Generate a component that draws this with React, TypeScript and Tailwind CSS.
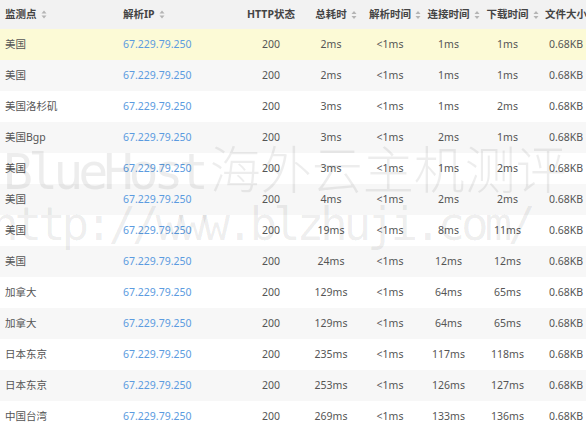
import React from 'react'

interface Row {
  node: string
  total: string
  dns: string
  connect: string
  download: string
}

const ROWS: Row[] = [
  { node: '美国', total: '2ms', dns: '<1ms', connect: '1ms', download: '1ms' },
  { node: '美国', total: '2ms', dns: '<1ms', connect: '1ms', download: '1ms' },
  { node: '美国洛杉矶', total: '3ms', dns: '<1ms', connect: '1ms', download: '2ms' },
  { node: '美国Bgp', total: '3ms', dns: '<1ms', connect: '2ms', download: '1ms' },
  { node: '美国', total: '3ms', dns: '<1ms', connect: '1ms', download: '2ms' },
  { node: '美国', total: '4ms', dns: '<1ms', connect: '2ms', download: '2ms' },
  { node: '美国', total: '19ms', dns: '<1ms', connect: '8ms', download: '11ms' },
  { node: '美国', total: '24ms', dns: '<1ms', connect: '12ms', download: '12ms' },
  { node: '加拿大', total: '129ms', dns: '<1ms', connect: '64ms', download: '65ms' },
  { node: '加拿大', total: '129ms', dns: '<1ms', connect: '64ms', download: '65ms' },
  { node: '日本东京', total: '235ms', dns: '<1ms', connect: '117ms', download: '118ms' },
  { node: '日本东京', total: '253ms', dns: '<1ms', connect: '126ms', download: '127ms' },
  { node: '中国台湾', total: '269ms', dns: '<1ms', connect: '133ms', download: '136ms' },
]

const GRID = 'grid grid-cols-[118px_123px_60px_60px_58px_59px_59px_58px]'

function SortIcon() {
  return (
    <svg width="6" height="9" viewBox="0 0 6 9" className="ml-[4px] shrink-0">
      <path d="M3 0.5L5.5 3.6H0.5Z" fill="#b4b4b4" />
      <path d="M3 8.5L5.5 5.4H0.5Z" fill="#b4b4b4" />
    </svg>
  )
}

function HeadCell({ title, sort, left }: { title: string; sort?: boolean; left?: boolean }) {
  if (left) {
    return (
      <div className="flex items-center pl-[5px] whitespace-nowrap">
        {title}
        {sort && <SortIcon />}
      </div>
    )
  }
  return (
    <div className="flex items-center justify-center whitespace-nowrap">
      <span className="relative">
        {title}
        {sort && (
          <span className="absolute left-full top-1/2 -translate-y-1/2 flex">
            <SortIcon />
          </span>
        )}
      </span>
    </div>
  )
}

export default function App() {
  return (
    <div
      className="relative w-[586px] h-[429px] overflow-hidden bg-white text-[10.5px] text-[#555]"
      style={{ fontFamily: '"Noto Sans", "Noto Sans CJK SC", sans-serif' }}
    >
      <div className={`${GRID} h-[29px] bg-[#f2f2f2] font-bold text-[#444]`}>
        <HeadCell title="监测点" sort left />
        <HeadCell title="解析IP" sort left />
        <HeadCell title="HTTP状态" />
        <HeadCell title="总耗时" sort />
        <HeadCell title="解析时间" sort />
        <HeadCell title="连接时间" sort />
        <HeadCell title="下载时间" sort />
        <HeadCell title="文件大小" sort />
      </div>

      {ROWS.map((r, i) => (
        <div
          key={i}
          className={`${GRID} h-[31px] items-center ${
            i === 0 ? 'bg-[#fcfad6]' : i % 2 === 1 ? 'bg-[#f7f7f7]' : 'bg-white'
          }`}
        >
          <div className="pl-[5px] whitespace-nowrap">{r.node}</div>
          <div className="pl-[5px] text-[#5b9be0]">67.229.79.250</div>
          <div className="text-center">200</div>
          <div className="text-center">{r.total}</div>
          <div className="text-center">{r.dns}</div>
          <div className="text-center">{r.connect}</div>
          <div className="text-center">{r.download}</div>
          <div className="text-center">0.68KB</div>
        </div>
      ))}

      {/* watermark */}
      <div className="pointer-events-none absolute inset-0 text-black/[0.07] whitespace-nowrap">
        <div className="absolute left-[3px] top-[142px] flex items-baseline leading-none">
          <span
            className="text-[50px] tracking-[-5px]"
            style={{ fontFamily: '"DejaVu Sans Mono", monospace' }}
          >
            BlueHost
          </span>
          <span
            className="text-[51px] ml-[6px] font-light"
            style={{ fontFamily: '"Noto Sans CJK SC", sans-serif' }}
          >
            海外云主机测评
          </span>
        </div>
        <div
          className="absolute left-[-9px] top-[201px] text-[46px] tracking-[-4.2px] leading-none"
          style={{ fontFamily: '"DejaVu Sans Mono", monospace' }}
        >
          http://www.blzhuji.com/
        </div>
      </div>
    </div>
  )
}
